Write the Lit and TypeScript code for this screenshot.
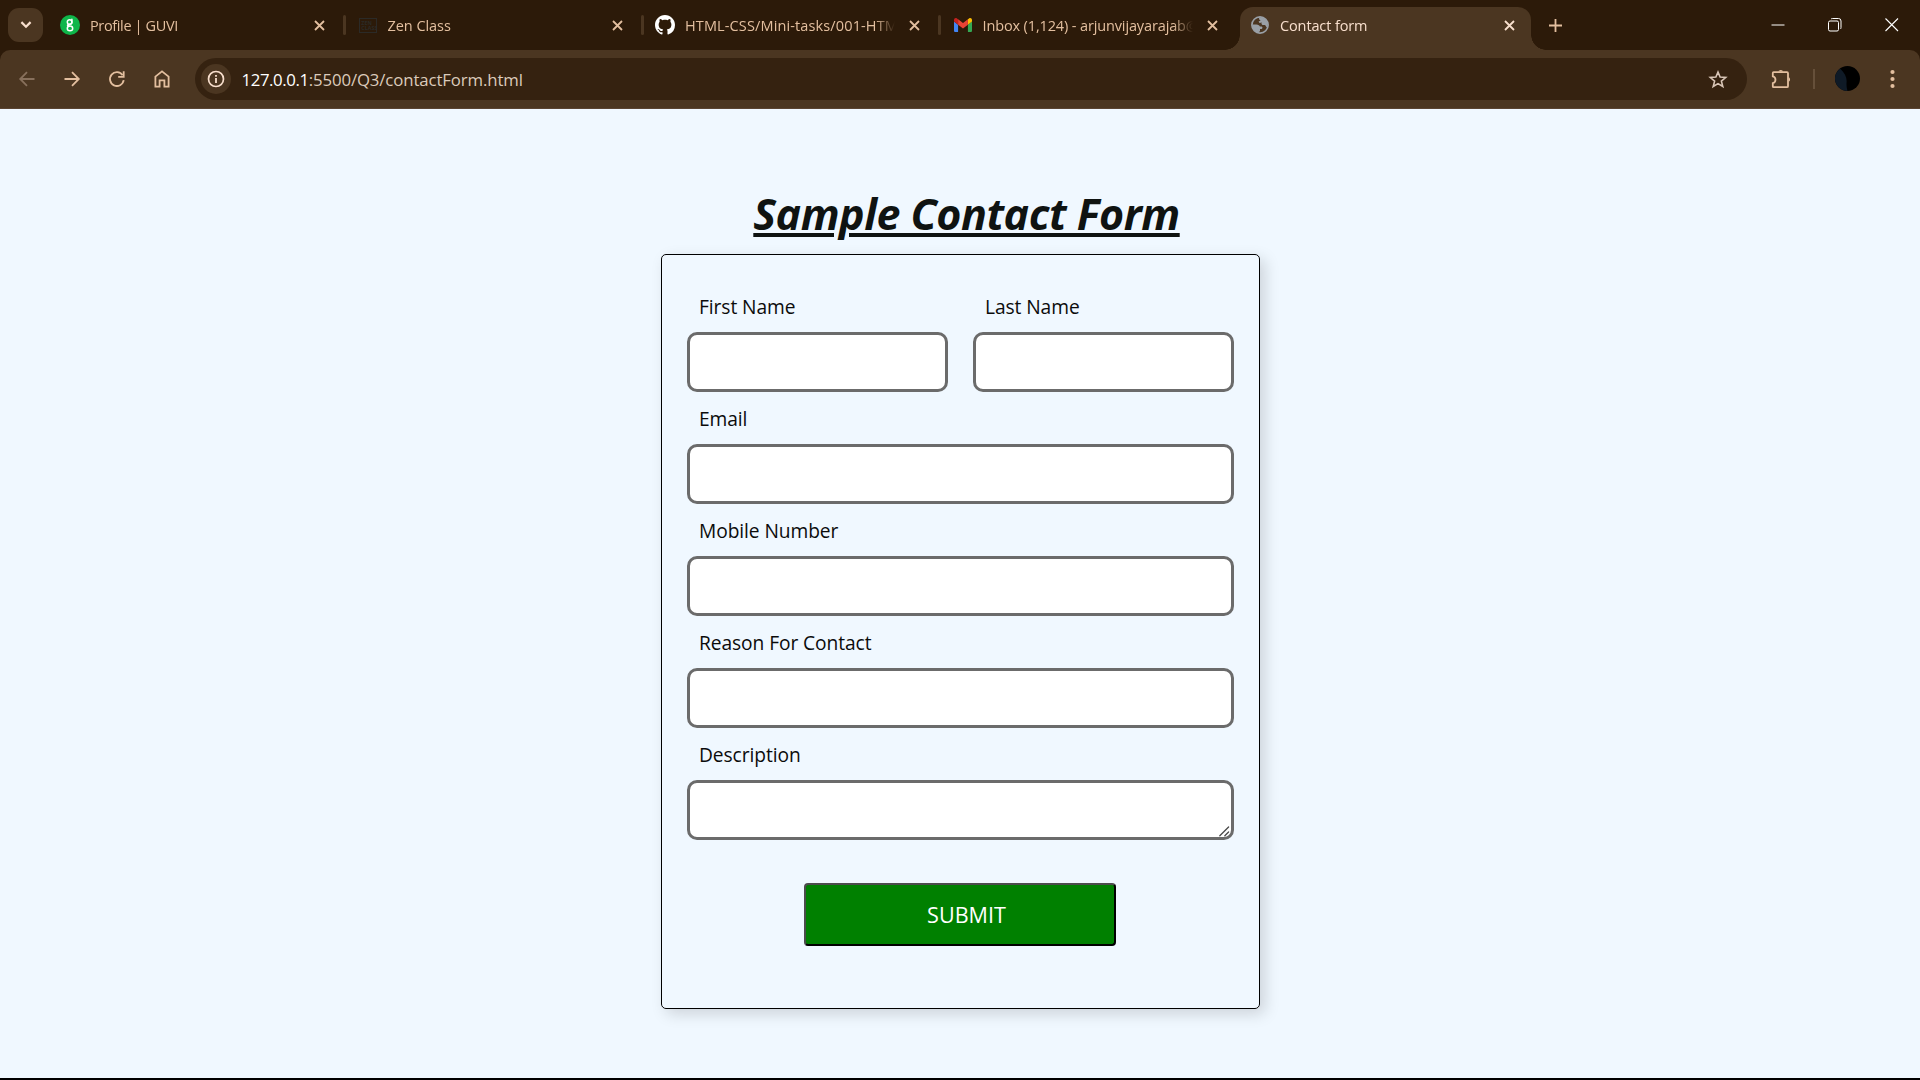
import { LitElement, html, css, svg, TemplateResult } from "lit";
import { customElement } from "lit/decorators.js";
import { classMap } from "lit/directives/class-map.js";
import { styleMap } from "lit/directives/style-map.js";

interface Tab {
  title: string;
  icon: TemplateResult;
  tracking: number;
  active?: boolean;
}

const guviIcon = html`<svg width="20" height="20" viewBox="0 0 20 20">
  <circle cx="10" cy="10" r="10" fill="#0fb64a" />
  <g fill="none" stroke="#fff" stroke-width="1.5" stroke-linecap="round">
    <circle cx="9.6" cy="7" r="2.3" />
    <path d="M11.9 4.3V7.4C11.9 9.2 9.6 9.2 8.2 9.7C7 10.3 7.6 11.2 9 11.2" />
    <ellipse cx="10" cy="13.4" rx="2.7" ry="2.3" />
  </g>
</svg>`;

const zenIcon = html`<svg width="18" height="15" viewBox="0 0 18 15">
  <rect x="0.5" y="0.5" width="17" height="14" fill="none" stroke="#2b2a27" />
  <text x="2.3" y="6.6" class="zen">ZEN</text>
  <text x="2.3" y="12.3" class="zen">CLASS</text>
</svg>`;

const githubIcon = html`<svg width="20" height="20" viewBox="0 0 16 16">
  <path
    fill="#fff"
    d="M8 0C3.58 0 0 3.58 0 8c0 3.54 2.29 6.53 5.47 7.59.4.07.55-.17.55-.38 0-.19-.01-.82-.01-1.49-2.01.37-2.53-.49-2.69-.94-.09-.23-.48-.94-.82-1.13-.28-.15-.68-.52-.01-.53.63-.01 1.08.58 1.23.82.72 1.21 1.87.87 2.33.66.07-.52.28-.87.51-1.07-1.78-.2-3.64-.89-3.64-3.95 0-.87.31-1.59.82-2.15-.08-.2-.36-1.02.08-2.12 0 0 .67-.21 2.2.82.64-.18 1.32-.27 2-.27s1.36.09 2 .27c1.53-1.04 2.2-.82 2.2-.82.44 1.1.16 1.92.08 2.12.51.56.82 1.27.82 2.15 0 3.07-1.87 3.75-3.65 3.95.29.25.54.73.54 1.48 0 1.07-.01 1.93-.01 2.2 0 .21.15.46.55.38A8.01 8.01 0 0 0 16 8c0-4.42-3.58-8-8-8z"
  />
</svg>`;

const gmailIcon = html`<svg width="18" height="14" viewBox="52 42 88 66" preserveAspectRatio="none">
  <path fill="#4285f4" d="M58 108h14V74L52 59v43c0 3.32 2.69 6 6 6" />
  <path fill="#34a853" d="M120 108h14c3.32 0 6-2.69 6-6V59l-20 15" />
  <path fill="#fbbc04" d="M120 48v26l20-15v-8c0-7.42-8.47-11.65-14.4-7.2" />
  <path fill="#ea4335" d="M72 74V48l24 18 24-18v26L96 92" />
  <path fill="#c5221f" d="M52 51v8l20 15V48l-5.6-4.2c-5.94-4.45-14.4-.22-14.4 7.2" />
</svg>`;

const globeIcon = html`<svg width="18" height="18" viewBox="0 0 18 18">
  <circle cx="9" cy="9" r="8.1" fill="#4b3621" stroke="#9aa0a6" stroke-width="1.7" />
  <path
    fill="#9aa0a6"
    d="M8.2 1.2C10.9 1 13.6 2.1 15.2 4.2C16.7 6.2 17.2 8.8 16.4 11.4C15.5 11.2 14.8 10.4 14.3 9.2C13.4 8.6 12.2 9.2 11.1 8.7C10.2 8.1 10.4 7.2 10.9 6.6L8.5 6.9L7.6 5.5L9.6 4.6L8 3.3Z"
  />
  <path
    fill="#9aa0a6"
    d="M1.2 8.4H5.4C7.4 8.4 8.6 9.4 8.9 10.6H10.6C11.7 10.8 11.8 12.5 10.7 12.9H9V15.3L6.8 16.6C3.2 15.4 1 12.2 1.2 8.4Z"
  />
</svg>`;

const TABS: Tab[] = [
  { title: "Profile | GUVI", icon: guviIcon, tracking: -0.36 },
  { title: "Zen Class", icon: zenIcon, tracking: -0.05 },
  { title: "HTML-CSS/Mini-tasks/001-HTML", icon: githubIcon, tracking: 0.13 },
  { title: "Inbox (1,124) - arjunvijayarajab@gmail.com", icon: gmailIcon, tracking: -0.13 },
  { title: "Contact form", icon: globeIcon, tracking: -0.12, active: true },
];

@customElement("browser-tab-strip")
export class BrowserTabStrip extends LitElement {
  static styles = css`
    :host {
      display: flex;
      height: 50px;
      background: #2c1a09;
      color: #e3bf9f;
    }
    svg {
      display: block;
      flex: none;
    }
    .search {
      flex: none;
      display: grid;
      place-items: center;
      width: 35px;
      height: 34px;
      margin: 8px 7px 0 8px;
      border-radius: 11px;
      background: #4b3621;
    }
    .tab {
      position: relative;
      flex: none;
      display: flex;
      align-items: center;
      box-sizing: border-box;
      width: 297.5px;
      height: 50px;
      padding-left: 10px;
    }
    .favicon {
      display: grid;
      place-items: center;
      width: 20px;
      height: 20px;
      margin-right: 10px;
    }
    .title {
      width: 214px;
      margin-right: 9px;
      overflow: hidden;
      white-space: nowrap;
      font: 14.5px/22px "Open Sans", "Noto Sans", sans-serif;
      -webkit-mask-image: linear-gradient(90deg, #000 190px, transparent 210px);
      mask-image: linear-gradient(90deg, #000 190px, transparent 210px);
      padding-top: 1px;
    }
    .sep {
      width: 3px;
      height: 20px;
      margin-left: 17px;
      border-radius: 1.5px;
      background: #4b3621;
    }
    .active {
      width: 291px;
      height: 43px;
      margin-top: 7px;
      padding-bottom: 7px;
      border-radius: 13px 13px 0 0;
      background: #4b3621;
      color: #f8dfcd;
    }
    .active::before,
    .active::after {
      content: "";
      position: absolute;
      bottom: 0;
      width: 15px;
      height: 15px;
    }
    .active::before {
      left: -15px;
      background: radial-gradient(circle at 0 0, transparent 14.5px, #4b3621 15px);
    }
    .active::after {
      right: -15px;
      background: radial-gradient(circle at 100% 0, transparent 14.5px, #4b3621 15px);
    }
    .new {
      margin: 18.5px 0 0 17.5px;
    }
    .window {
      display: flex;
      gap: 43px;
      margin: 17.5px 21.5px 0 auto;
    }
    .zen {
      font: bold 5.4px "Open Sans", sans-serif;
      fill: #2b2a27;
    }
  `;

  private renderTab(t: Tab, next?: Tab) {
    return html`<div class=${classMap({ tab: true, active: !!t.active })}>
      <div class="favicon">${t.icon}</div>
      <div class="title" style=${styleMap({ letterSpacing: `${t.tracking}px` })}>${t.title}</div>
      <svg width="13" height="13" viewBox="0 0 13 13">
        <path d="M2 2L11 11M11 2L2 11" stroke="currentColor" stroke-width="1.8" />
      </svg>
      ${next && !next.active ? html`<div class="sep"></div>` : ""}
    </div>`;
  }

  render() {
    return html`
      <div class="search">
        <svg width="12" height="8" viewBox="0 0 12 8">
          <path d="M1.4 1.1L6 5.7L10.6 1.1" fill="none" stroke="#f8dfcd" stroke-width="2.2" />
        </svg>
      </div>
      ${TABS.map((t, i) => this.renderTab(t, TABS[i + 1]))}
      <svg class="new" width="13" height="13" viewBox="0 0 13 13">
        <path d="M6.5 0V13M0 6.5H13" stroke="currentColor" stroke-width="1.8" />
      </svg>
      <div class="window">
        <svg width="14" height="14" viewBox="0 0 14 14">
          <path d="M0.5 7H13.5" stroke="#fff" />
        </svg>
        <svg width="14" height="14" viewBox="0 0 14 14">
          <rect x="0.5" y="3" width="10" height="10" rx="1.5" fill="none" stroke="#fff" />
          <path d="M3 1.2Q3.4 .5 4.5 .5H10.5Q13 .5 13 3V9.5Q13 10.6 12.3 11" fill="none" stroke="#fff" />
        </svg>
        <svg width="14" height="14" viewBox="0 0 14 14">
          <path d="M0.5 0.5L13 13M13 0.5L0.5 13" stroke="#fff" stroke-width="1.1" />
        </svg>
      </div>
    `;
  }
}

@customElement("browser-toolbar")
export class BrowserToolbar extends LitElement {
  static styles = css`
    :host {
      display: block;
      height: 59px;
      background: #2c1a09;
      color: #e3bf9f;
    }
    .bar {
      display: flex;
      align-items: center;
      box-sizing: border-box;
      height: 59px;
      padding: 0 25px 1px 17px;
      border-radius: 10px 10px 0 0;
      border-bottom: 1px solid #5a4432;
      background: #4b3621;
    }
    svg {
      display: block;
      flex: none;
    }
    .nav {
      display: flex;
      gap: 25px;
      margin-right: 23px;
    }
    .disabled {
      color: #87705c;
    }
    .omnibox {
      flex: none;
      display: flex;
      align-items: center;
      box-sizing: border-box;
      width: 1552px;
      height: 42px;
      margin-right: 23px;
      padding: 0 19.5px 0 6px;
      border-radius: 21px;
      background: #352210;
      color: #f8dfcd;
    }
    .info {
      display: grid;
      place-items: center;
      width: 30px;
      height: 30px;
      margin-right: 10.5px;
      border-radius: 50%;
      background: #4b3621;
    }
    .url {
      flex: 1;
      font: 16.8px/24px "Open Sans", "Noto Sans", sans-serif;
      letter-spacing: -0.12px;
      color: #dccbbb;
      padding-top: 2px;
    }
    .host {
      letter-spacing: -0.4px;
      color: #fff;
    }
    .sep {
      width: 2px;
      height: 20px;
      margin: 0 20px 0 21px;
      background: #66503a;
    }
    .avatar {
      margin-right: 30px;
    }
  `;

  render() {
    return html`<div class="bar">
      <div class="nav">
        <svg class="disabled" width="20" height="20" viewBox="0 0 20 20">
          <path d="M17.5 10H3.5M10 3.2L3.2 10L10 16.8" fill="none" stroke="currentColor" stroke-width="1.8" />
        </svg>
        <svg width="20" height="20" viewBox="0 0 20 20">
          <path d="M2.5 10H16.5M10 3.2L16.8 10L10 16.8" fill="none" stroke="currentColor" stroke-width="1.8" />
        </svg>
        <svg width="20" height="20" viewBox="0 0 20 20">
          <path d="M16.7 11.2A6.9 6.9 0 1 1 15.6 6.2" fill="none" stroke="currentColor" stroke-width="1.8" />
          <path d="M16.7 2.3V7.9H11.2" fill="none" stroke="currentColor" stroke-width="1.8" />
        </svg>
        <svg width="20" height="20" viewBox="0 0 20 20">
          <path
            d="M3.4 17.6V7.6L10 2.4L16.6 7.6V17.6H12.4V11.4H7.6V17.6Z"
            fill="none"
            stroke="currentColor"
            stroke-width="1.8"
          />
        </svg>
      </div>
      <div class="omnibox">
        <div class="info">
          <svg width="18" height="18" viewBox="0 0 18 18">
            <circle cx="9" cy="9" r="7.5" fill="none" stroke="currentColor" stroke-width="1.7" />
            <path d="M9 8V13M9 4.9V6.7" stroke="currentColor" stroke-width="1.8" />
          </svg>
        </div>
        <div class="url"><span class="host">127.0.0.1</span>:5500/Q3/contactForm.html</div>
        <svg width="20" height="20" viewBox="0 0 20 20">
          <path
            d="M10 3L12.1 8.1L17.7 8.5L13.4 12.1L14.8 17.5L10 14.6L5.2 17.5L6.6 12.1L2.3 8.5L7.9 8.1Z"
            fill="none"
            stroke="#d8c5b6"
            stroke-width="1.6"
          />
        </svg>
      </div>
      <svg width="22" height="22" viewBox="0 0 22 22">
        <path
          d="M3.6 4.2H17Q18 4.2 18 5.2V18.2Q18 19.2 17 19.2H3.6Q2.8 19.2 2.8 18.4V15.2A3.5 3.5 0 0 0 2.8 8.4V5Q2.8 4.2 3.6 4.2Z"
          fill="none"
          stroke="currentColor"
          stroke-width="1.8"
        />
        <path d="M8.4 3.6A2.5 2.2 0 0 1 13.2 3.6ZM18.6 9A2.4 2.6 0 0 1 18.6 13.8Z" fill="currentColor" />
      </svg>
      <div class="sep"></div>
      <svg class="avatar" width="25" height="25" viewBox="0 0 25 25">
        <circle cx="12.5" cy="12.5" r="12.5" fill="#000" />
        <path
          d="M5 2.5C9.5 7 12 11 11.6 16C11.3 20 11.8 22 12.5 25A12.5 12.5 0 0 1 5 2.5Z"
          fill="#0f1a26"
        />
      </svg>
      <svg width="5" height="20" viewBox="0 0 5 20">
        ${[3, 10, 17].map((y) => svg`<circle cx="2.5" cy=${y} r="2.1" fill="currentColor" />`)}
      </svg>
    </div>`;
  }
}

@customElement("contact-form")
export class ContactForm extends LitElement {
  static styles = css`
    :host {
      display: flex;
      flex-direction: column;
      align-items: center;
      height: 969px;
      box-sizing: border-box;
      padding-top: 75px;
      background: #f0f8ff;
      color: #0b0b0b;
      font-family: "Open Sans", "Noto Sans", sans-serif;
    }
    h1 {
      margin: 0 0 10px 13px;
      font-size: 43px;
      line-height: 60px;
      font-style: italic;
      font-weight: 700;
      letter-spacing: -0.5px;
      color: #0f1311;
      text-decoration: underline;
      text-decoration-thickness: 4px;
      text-underline-offset: 3px;
    }
    form {
      box-sizing: border-box;
      width: 599px;
      height: 755px;
      padding: 30px 25px 0;
      border: 1px solid #000;
      border-radius: 5px;
      margin-left: 1px;
      box-shadow: 5px 5px 15px rgba(0, 0, 0, 0.15);
    }
    .names {
      display: grid;
      grid-template-columns: 261px 261px;
      gap: 25px;
    }
    label {
      display: flex;
      flex-direction: column;
      font-size: 19.2px;
      line-height: 26px;
      letter-spacing: -0.08px;
    }
    .caption {
      box-sizing: border-box;
      height: 52px;
      padding: 14px 0 0 12px;
    }
    .names .caption {
      height: 47px;
      padding-top: 9px;
    }
    input,
    textarea {
      display: block;
      box-sizing: border-box;
      width: 100%;
      height: 60px;
      margin: 0;
      padding: 10px;
      border: 3px solid #6b6b6b;
      border-radius: 10px;
      background: #fff;
      font: inherit;
      outline: none;
      resize: none;
    }
    .area {
      position: relative;
    }
    .grip {
      position: absolute;
      right: 4px;
      bottom: 3px;
    }
    button {
      display: block;
      box-sizing: border-box;
      width: 312px;
      height: 63px;
      margin: 43px 0 0 117px;
      padding: 0 0 0 13px;
      border: 2px solid;
      border-color: #4c4c4c #000 #000 #4c4c4c;
      border-radius: 4px;
      background: #008000;
      color: #fff;
      font: 21.6px/30px "Open Sans", "Noto Sans", sans-serif;
    }
  `;

  render() {
    const rows = ["Email", "Mobile Number", "Reason For Contact"];
    return html`
      <h1>Sample Contact Form</h1>
      <form @submit=${(e: Event) => e.preventDefault()}>
        <div class="names">
          ${["First Name", "Last Name"].map(
            (n) => html`<label><span class="caption">${n}</span><input type="text" /></label>`
          )}
        </div>
        ${rows.map((n) => html`<label><span class="caption">${n}</span><input type="text" /></label>`)}
        <label>
          <span class="caption">Description</span>
          <div class="area">
            <textarea></textarea>
            <svg class="grip" width="12" height="12" viewBox="0 0 12 12">
              <path
                d="M1.8 10.8L10.6 2M6.8 10.8L10.6 7"
                stroke="#4a4a4a"
                stroke-width="1.3"
                stroke-linecap="round"
              />
            </svg>
          </div>
        </label>
        <button type="submit">SUBMIT</button>
      </form>
    `;
  }
}

@customElement("app-root")
export class AppRoot extends LitElement {
  static styles = css`
    :host {
      display: flex;
      flex-direction: column;
      box-sizing: border-box;
      width: 1920px;
      height: 1080px;
      overflow: hidden;
      border-bottom: 2px solid #000;
    }
  `;
  render() {
    return html`
      <browser-tab-strip></browser-tab-strip>
      <browser-toolbar></browser-toolbar>
      <contact-form></contact-form>
    `;
  }
}
